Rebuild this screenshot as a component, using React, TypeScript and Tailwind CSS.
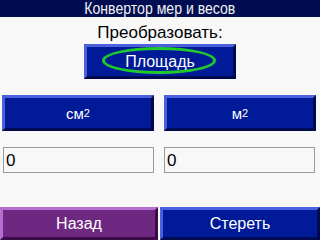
import React from 'react';

const bevelBlue =
    'bg-[#001a98] border-t-[3px] border-l-[3px] border-b-[3px] border-r-[3px] border-t-[#4c60de] border-l-[#4c60de] border-b-[#000a4e] border-r-[#000a4e]';

const UnitButton: React.FC<{ unit: string }> = ({ unit }) => (
    <button className={`w-[152px] h-[36px] ${bevelBlue} flex items-center justify-center text-white text-[15px] leading-none`}>
        <span>
            {unit}
            <sup className="text-[11px] relative -top-[2px]">2</sup>
        </span>
    </button>
);

const ValueField: React.FC<{ value: string }> = ({ value }) => (
    <div className="w-[151px] h-[26px] border border-[#9a9a9a] bg-[#f8f8f8] flex items-center pl-[2px] text-[17px] text-black leading-none">
        {value}
    </div>
);

export default function App() {
    return (
        <div
            className="w-[320px] h-[240px] bg-[#f8f8f8] flex flex-col overflow-hidden"
            style={{ fontFamily: '"Liberation Sans", Arial, sans-serif' }}
        >
            <div className="h-[17px] bg-[#000d50] text-[#f0f0f0] text-[16px] leading-[17px] text-center whitespace-nowrap">
                <span className="inline-block scale-x-[0.88]">Конвертор мер и весов</span>
            </div>

            <div className="h-[27px] flex items-end justify-center text-[17px] text-black leading-none pb-[3px]">
                Преобразовать:
            </div>

            <div className="flex justify-center">
                <button className={`relative w-[152px] h-[35px] ${bevelBlue} flex items-center justify-center text-white text-[16px] leading-none`}>
                    <span className="absolute left-[15px] top-[0px] w-[114px] h-[27px] rounded-[50%] border-[3px] border-[#1ecb2a]"></span>
                    <span className="relative">Площадь</span>
                </button>
            </div>

            <div className="flex justify-between pl-[2px] pr-[4px] mt-[16px]">
                <UnitButton unit="см" />
                <UnitButton unit="м" />
            </div>

            <div className="flex justify-between pl-[3px] pr-[5px] mt-[16px]">
                <ValueField value="0" />
                <ValueField value="0" />
            </div>

            <div className="flex justify-between mt-auto h-[33px]">
                <button className="w-[158px] h-full bg-[#6e2882] border-t-[3px] border-l-[3px] border-b-[3px] border-r-[3px] border-t-[#b46ed0] border-l-[#b46ed0] border-b-[#3a0c48] border-r-[#3a0c48] text-white text-[16px] leading-none">
                    Назад
                </button>
                <button className={`w-[160px] h-full ${bevelBlue} text-white text-[16px] leading-none`}>
                    Стереть
                </button>
            </div>
        </div>
    );
}
